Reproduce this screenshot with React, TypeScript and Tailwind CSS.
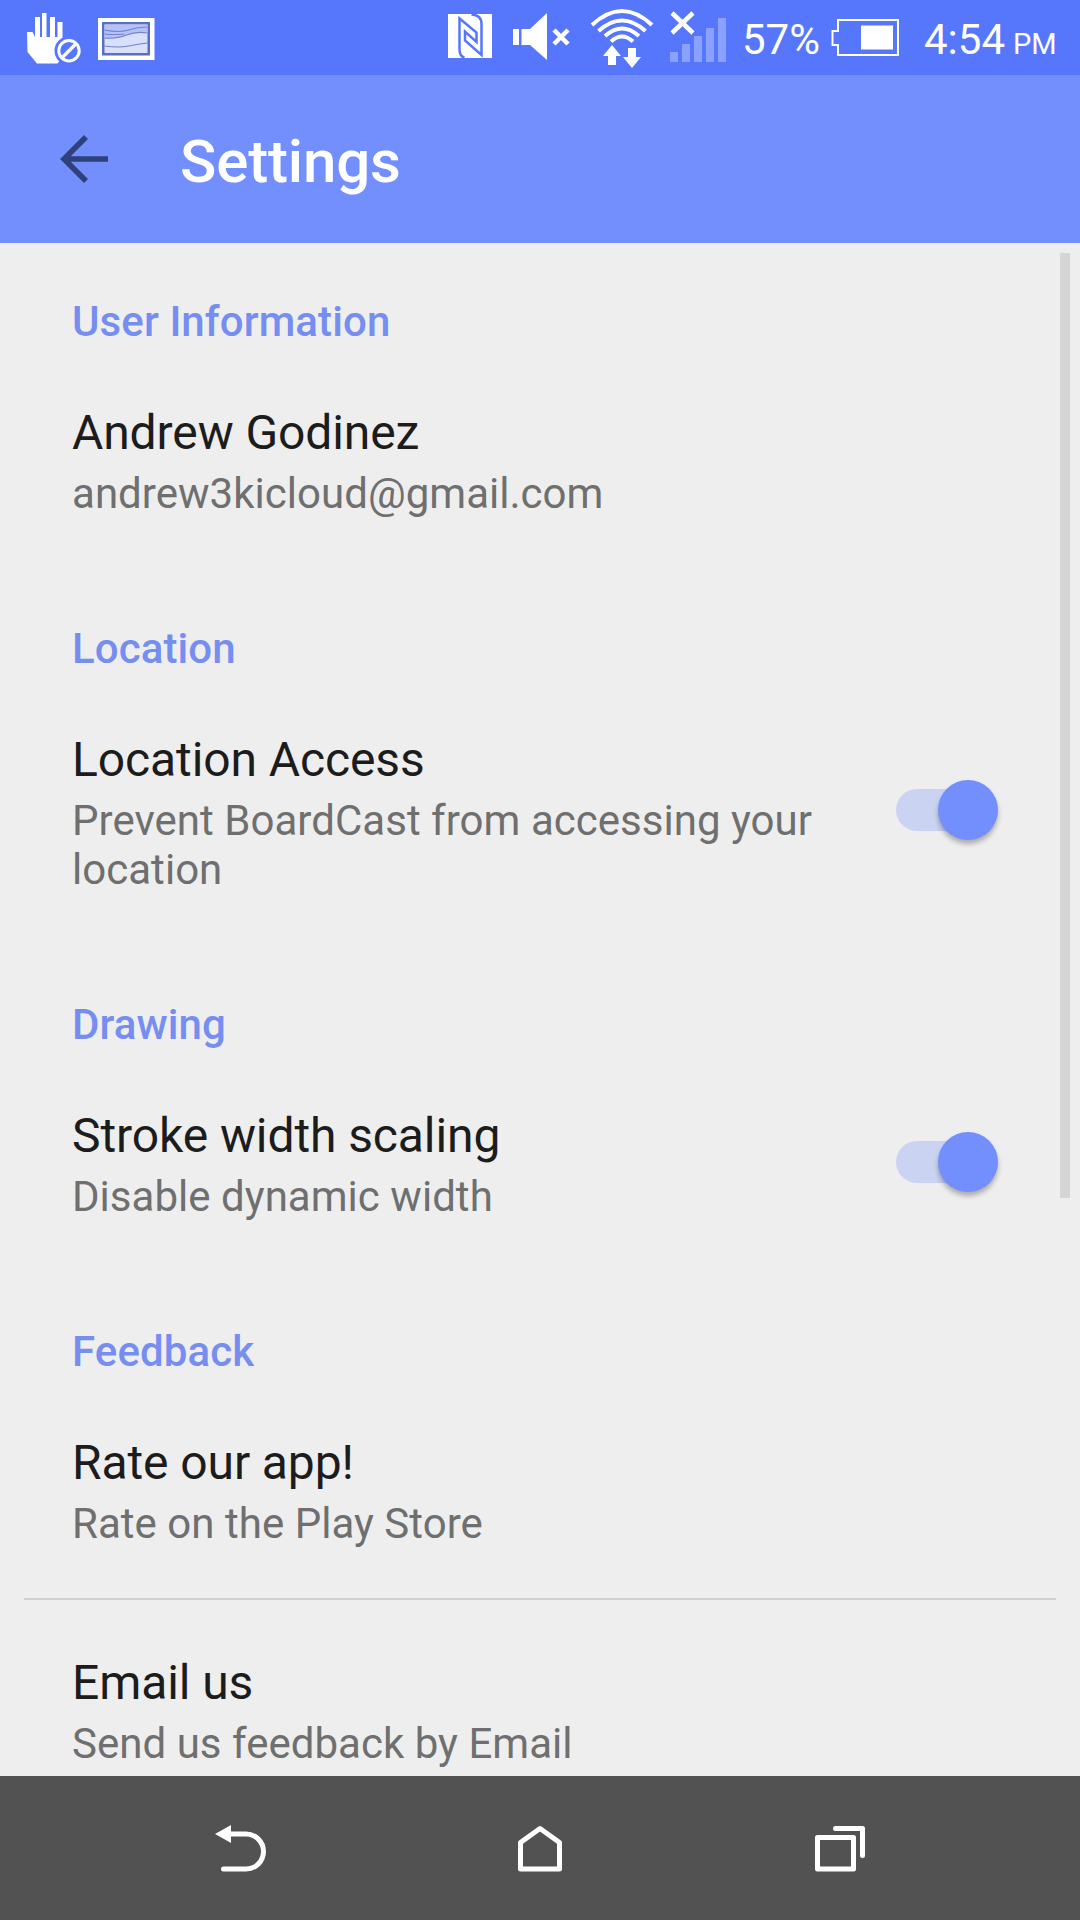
import React, { useState } from "react";

interface PreferenceProps {
  title: string;
  summary: string;
  toggle?: boolean;
}

function StatusBar() {
  return (
    <div className="relative h-[75px] shrink-0 bg-[#5677fc] text-white">
      {/* Notification + system icons */}
      <svg className="block" width="1080" height="75" viewBox="0 0 1080 75" fill="none">
        {/* Hand */}
        <path
          fill="#fff"
          d="M27 32h5.500l2.500 5V17h5v20h2V13h4.500v24H50V17h5v20h2.500V22H62.500v35l-5 6.500H37L27.500 52z"
        />
        <circle cx="69" cy="50.700" r="14.500" fill="#5677fc" />
        <circle cx="69" cy="50.700" r="10.200" stroke="#fff" strokeWidth="3" />
        <path d="M62.500 57.200 75.500 44.200" stroke="#fff" strokeWidth="3.400" />

        {/* Picture */}
        <path fill="#fff" d="M98 18h56.500v42H98z" />
        <path fill="#5a6fc0" d="M102 22h48v33.500h-48z" />
        <path fill="#d9e0fb" d="M104.500 24.500h43v28.500h-43z" />
        <path fill="#b5c1fa" d="M104.500 24.500h43v8q-12-1-22 3t-21 3z" />
        <path
          d="M104.500 30q15 3 24 0t19-3M104.500 34q10 1 20 0M104.500 38q12 1 22-3t21-2M104.500 46q14 2 24 0t19-3"
          stroke="#7383cc"
          strokeWidth="1.100"
        />

        {/* NFC */}
        <path fill="#fff" d="M448 14h44v44h-44z" />
        <path
          d="M464.500 57.500q-5-1-5-8.500V18.500L476.500 32.500V42L465 31.500V40.500L481.500 55V24q0-9-10-9.500"
          stroke="#5677fc"
          strokeWidth="2.500"
        />

        {/* Muted speaker */}
        <path fill="#fff" d="M513 29h6v16h-6zM521.500 29H530l17-16v47l-17-15h-8.500z" />
        <path d="m554 30 14 14m0-14-14 14" stroke="#fff" strokeWidth="4.500" />

        {/* Wifi */}
        <path
          d="M592 25q30-28 60 0M598.500 31q23.500-21 47 0M605 36q17-15 34 0M611 41.500q11-10 22 0"
          stroke="#fff"
          strokeWidth="4"
        />
        <path fill="#fff" d="m612 45 9 11h-5v9h-8v-9h-5zM632 68l-9-11h5v-9h8v9h5z" />

        {/* Signal */}
        <path
          fill="#8ba1ff"
          d="M670 52h8v10h-8zM682 44h8v18h-8zM694 36h8v26h-8zM706 28h8v34h-8zM718 18h8v44h-8z"
        />
        <path d="m672 13 21 20m0-20-21 20" stroke="#fff" strokeWidth="4.500" />

        {/* Battery */}
        <path d="M838 20h60v35h-60v-10h-5.500V31h5.500z" stroke="#fff" strokeWidth="2" />
        <path fill="#fff" d="M861 25.500h32v24h-32z" />
      </svg>
      <span className="absolute top-[15px] left-[742px] text-[42px] leading-[49px]">57%</span>
      <span className="absolute top-[15px] left-[924px] text-[42px] leading-[49px] whitespace-nowrap">
        4:54<span className="ml-[8px] text-[29px]">PM</span>
      </span>
    </div>
  );
}

function Toolbar() {
  return (
    <header className="flex h-[168px] shrink-0 items-center bg-[#738ffe] pt-[6px] pl-[60px]">
      <svg width="48" height="48" viewBox="0 0 48 48" fill="none" className="mt-[-6px]">
        <path d="M26 2 4 24l22 22M4 24h44" stroke="#2f407c" strokeWidth="5.600" />
      </svg>
      <h1 className="ml-[72px] text-[60px] leading-[70px] font-medium tracking-[-0.15px] text-white">
        Settings
      </h1>
    </header>
  );
}

function Switch() {
  const [on, setOn] = useState(true);

  return (
    <button
      type="button"
      role="switch"
      aria-checked={on}
      onClick={() => setOn(!on)}
      className={`flex h-[42px] w-[102px] shrink-0 items-center rounded-full ${
        on ? "justify-end bg-[#cbd3f2]" : "justify-start bg-[#c4c4c4]"
      }`}
    >
      <span
        className={`h-[60px] w-[60px] shrink-0 rounded-full shadow-[0_4px_5px_rgba(0,0,0,0.28)] ${
          on ? "bg-[#738ffe]" : "bg-[#f1f1f1]"
        }`}
      />
    </button>
  );
}

function Category({ label }: { label: string }) {
  return (
    <h2 className="h-[114px] pt-[54px] pl-[72px] text-[42px] leading-[49px] font-medium tracking-[0.1px] text-[#758eef]">
      {label}
    </h2>
  );
}

function Preference({ title, summary, toggle }: PreferenceProps) {
  return (
    <div className="flex items-center justify-between pr-[82px] pb-[10px] pl-[72px]">
      <div className="w-[760px] pt-[48px] pb-[42px]">
        <div className="text-[48px] leading-[56px] tracking-[-0.1px] text-[#1c1c1c]">{title}</div>
        <div className="mt-[8px] text-[42px] leading-[49px] tracking-[0.03px] text-[#6f6f6f]">
          {summary}
        </div>
      </div>
      {toggle && <Switch />}
    </div>
  );
}

function NavBar() {
  return (
    <nav className="flex h-[144px] shrink-0 items-center bg-[#525252] pb-[5px] pl-[210px]">
      {/* Back */}
      <svg width="60" height="60" viewBox="0 0 60 60" fill="none">
        <path d="M5 18 21 9v18z" fill="#fff" />
        <path
          d="M20 18h16a17.500 17.500 0 0 1 0 35H13.500"
          stroke="#fff"
          strokeWidth="5"
          strokeLinecap="round"
        />
      </svg>
      {/* Home */}
      <svg width="60" height="60" viewBox="0 0 60 60" fill="none" className="ml-[240px]">
        <path
          d="M10.500 26.500 30 12.500l19.500 14V53h-39z"
          stroke="#fff"
          strokeWidth="5"
          strokeLinejoin="round"
        />
      </svg>
      {/* Recents */}
      <svg width="60" height="60" viewBox="0 0 60 60" fill="none" className="ml-[240px]">
        <path
          d="M7.500 21.500h36V53h-36zM25.500 12.500h27v27"
          stroke="#fff"
          strokeWidth="5"
          strokeLinecap="round"
          strokeLinejoin="round"
        />
      </svg>
    </nav>
  );
}

export default function App() {
  return (
    <div className="flex h-[1920px] w-[1080px] flex-col overflow-hidden bg-[#eeeeee] font-['Roboto',sans-serif]">
      <StatusBar />
      <Toolbar />
      <main className="relative min-h-0 flex-1 overflow-hidden">
        <Category label="User Information" />
        <Preference title="Andrew Godinez" summary="andrew3kicloud@gmail.com" />

        <Category label="Location" />
        <Preference
          title="Location Access"
          summary="Prevent BoardCast from accessing your location"
          toggle
        />

        <Category label="Drawing" />
        <Preference title="Stroke width scaling" summary="Disable dynamic width" toggle />

        <Category label="Feedback" />
        <Preference title="Rate our app!" summary="Rate on the Play Store" />
        <div className="mx-[24px] mt-[-2px] mb-[7px] h-[2px] bg-[#d0d0d0]" />
        <Preference title="Email us" summary="Send us feedback by Email" />

        {/* Scrollbar */}
        <div className="absolute top-[10px] left-[1060px] h-[945px] w-[10px] bg-[#d5d5d5]" />
      </main>
      <NavBar />
    </div>
  );
}
